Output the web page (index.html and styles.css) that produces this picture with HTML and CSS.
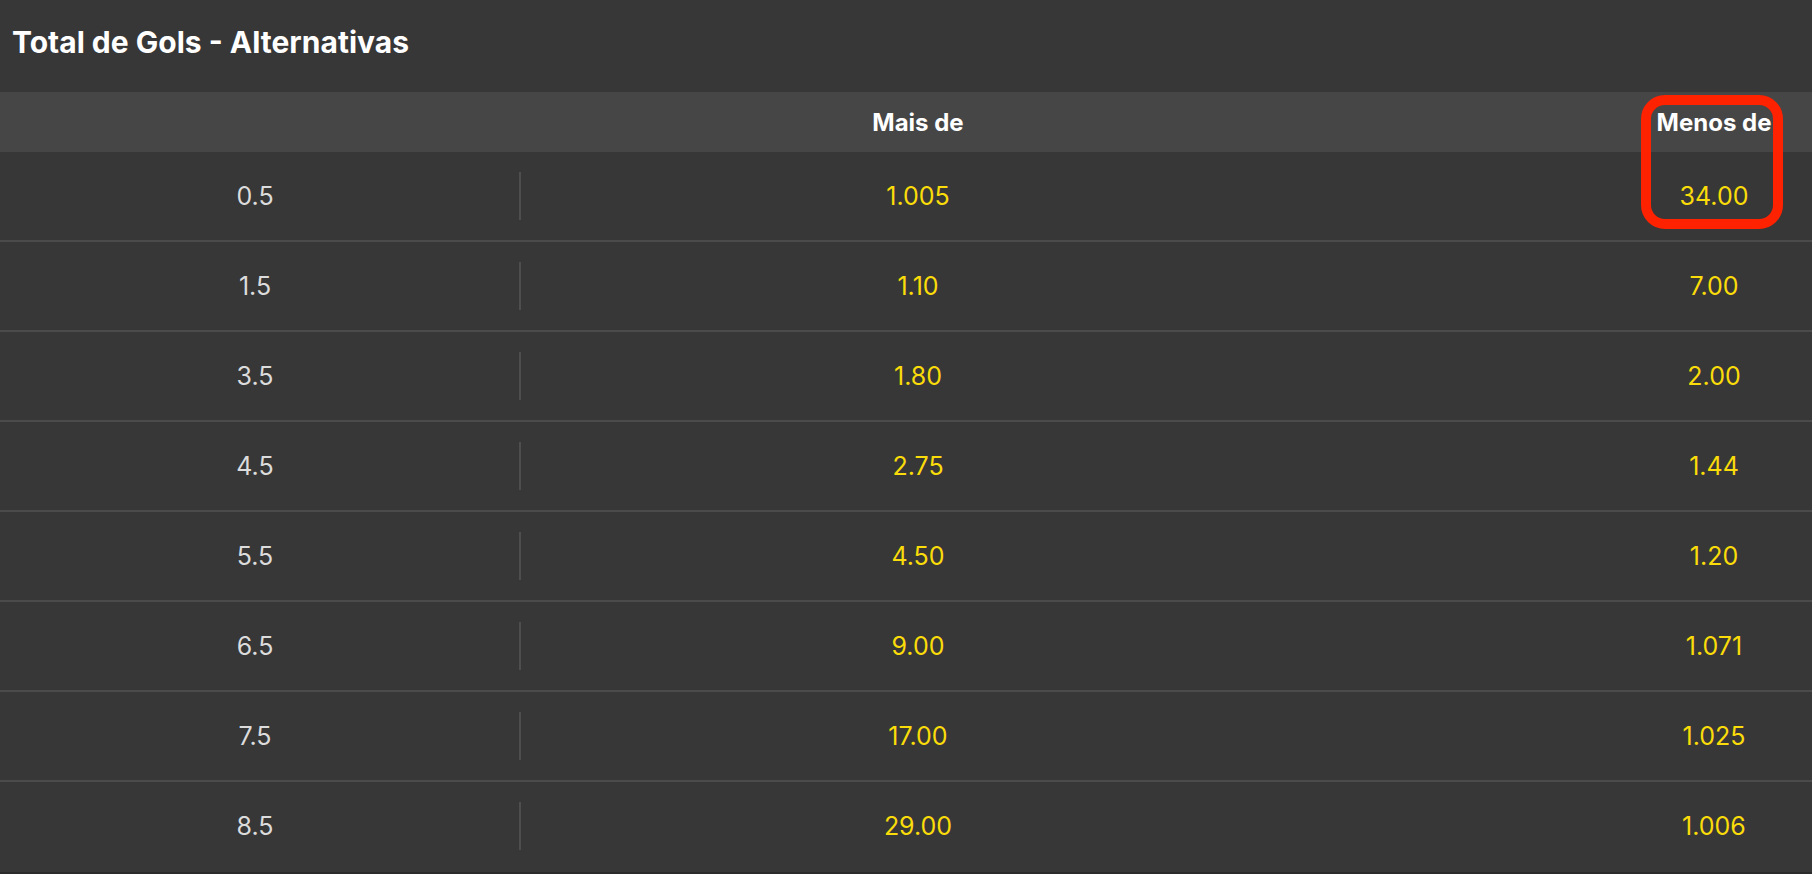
FILE: index.html
```html
<!DOCTYPE html>
<html lang="pt">
<head>
<meta charset="utf-8">
<title>Total de Gols - Alternativas</title>
<link rel="stylesheet" href="styles.css">
</head>
<body>
<div class="market">
  <h1 class="title">Total de Gols - Alternativas</h1>
  <div class="table">
    <div class="row head">
      <div class="cell c1"></div>
      <div class="cell sepcol"></div>
      <div class="cell c2">Mais de</div>
      <div class="cell spacer"></div>
      <div class="cell c3">Menos de</div>
    </div>
    <div class="row"><div class="cell c1 line">0.5</div><div class="cell sepcol"><span class="sep"></span></div><div class="cell c2 odd">1.005</div><div class="cell spacer"></div><div class="cell c3 odd">34.00</div></div>
    <div class="row"><div class="cell c1 line">1.5</div><div class="cell sepcol"><span class="sep"></span></div><div class="cell c2 odd">1.10</div><div class="cell spacer"></div><div class="cell c3 odd">7.00</div></div>
    <div class="row"><div class="cell c1 line">3.5</div><div class="cell sepcol"><span class="sep"></span></div><div class="cell c2 odd">1.80</div><div class="cell spacer"></div><div class="cell c3 odd">2.00</div></div>
    <div class="row"><div class="cell c1 line">4.5</div><div class="cell sepcol"><span class="sep"></span></div><div class="cell c2 odd">2.75</div><div class="cell spacer"></div><div class="cell c3 odd">1.44</div></div>
    <div class="row"><div class="cell c1 line">5.5</div><div class="cell sepcol"><span class="sep"></span></div><div class="cell c2 odd">4.50</div><div class="cell spacer"></div><div class="cell c3 odd">1.20</div></div>
    <div class="row"><div class="cell c1 line">6.5</div><div class="cell sepcol"><span class="sep"></span></div><div class="cell c2 odd">9.00</div><div class="cell spacer"></div><div class="cell c3 odd">1.071</div></div>
    <div class="row"><div class="cell c1 line">7.5</div><div class="cell sepcol"><span class="sep"></span></div><div class="cell c2 odd">17.00</div><div class="cell spacer"></div><div class="cell c3 odd">1.025</div></div>
    <div class="row last"><div class="cell c1 line">8.5</div><div class="cell sepcol"><span class="sep"></span></div><div class="cell c2 odd">29.00</div><div class="cell spacer"></div><div class="cell c3 odd">1.006</div></div>
    <div class="highlight"></div>
  </div>
</div>
</body>
</html>
```

FILE: styles.css
```css
html, body {
  margin: 0;
  padding: 0;
  background: #2b2b2b;
}

body {
  font-family: Inter, "Noto Sans", "Liberation Sans", sans-serif;
  color: #ffffff;
}

.market {
  width: 1812px;
  height: 872px;
  background: #373737;
}

.title {
  box-sizing: border-box;
  height: 92px;
  margin: 0;
  padding: 24px 12px 0;
  font-size: 30px;
  line-height: 36px;
  font-weight: 700;
  color: #ffffff;
  letter-spacing: 0;
}

.table {
  position: relative;
}

.row {
  display: grid;
  grid-template-columns: 510px 20px 776px 1fr 196px;
  height: 88px;
  border-bottom: 2px solid #4b4b4b;
}

.row.last {
  border-bottom-color: #373737;
}

.row.head {
  height: 60px;
  border-bottom: none;
  background: #464646;
}

.cell {
  display: flex;
  align-items: center;
  justify-content: center;
  white-space: nowrap;
}

.head .cell {
  font-size: 24px;
  font-weight: 700;
  color: #ffffff;
}

.line {
  font-size: 25px;
  color: #dcdcdc;
}

.odd {
  font-size: 25px;
  color: #fadc0a;
}

.sep {
  display: block;
  width: 2px;
  height: 48px;
  background: #4e4e4e;
}

.highlight {
  position: absolute;
  left: 1641px;
  top: 3px;
  width: 142px;
  height: 134px;
  box-sizing: border-box;
  border: 10px solid #ff2200;
  border-radius: 24px;
  pointer-events: none;
}
```
